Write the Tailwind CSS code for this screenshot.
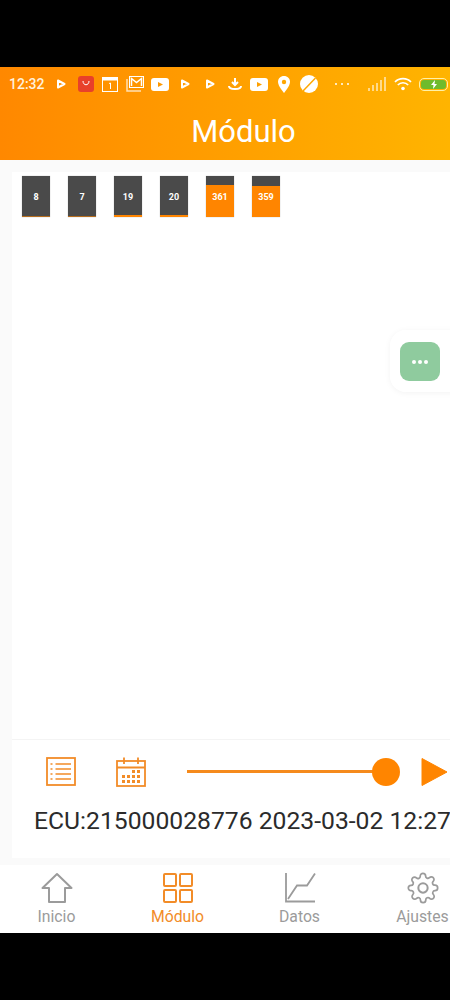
<!DOCTYPE html>
<html lang="en">
<head>
    <meta charset="UTF-8">
    <meta name="viewport" content="width=device-width, initial-scale=1.0">
    <title>Módulo</title>
    <script src="https://cdn.jsdelivr.net/npm/@tailwindcss/browser@4"></script>
</head>
<body class="bg-black">
<div class="relative w-[450px] h-[1000px] overflow-hidden flex flex-col bg-black font-['Roboto',sans-serif]">
    <div class="h-[67px] shrink-0"></div>

    <!-- header with status bar -->
    <header class="h-[93px] shrink-0 bg-gradient-to-r from-[#ff8800] to-[#ffb400] text-white">
        <div class="h-[34px] flex items-center pl-[9px] relative">
            <span class="text-[14px] font-medium w-[44px] text-[#fff1dc]">12:32</span>
            <div class="flex items-center h-full">
                <svg class="ml-[3px] w-[10px] h-[10px]" viewBox="0 0 10 10"><path d="M2 1.5 L8.5 5 L2 8.5 Z" fill="none" stroke="white" stroke-width="2" stroke-linejoin="round"/></svg>
                <div class="ml-[12px] w-[16px] h-[16px] rounded-[3px] bg-[#e8402a] flex items-center justify-center">
                    <svg class="w-[10px] h-[8px]" viewBox="0 0 10 8"><path d="M2 1 C2 6 8 6 8 1" fill="none" stroke="white" stroke-width="1"/></svg>
                </div>
                <svg class="ml-[8px] w-[16px] h-[15px]" viewBox="0 0 16 15"><rect x="0.5" y="0.5" width="15" height="14" fill="none" stroke="white"/><rect x="0.5" y="0.5" width="15" height="3" fill="white"/><path d="M7 6.5 L8.5 6 V12" fill="none" stroke="white"/></svg>
                <svg class="ml-[8px] w-[18px] h-[16px]" viewBox="0 0 18 16"><rect x="3.5" y="0.5" width="14" height="11" fill="none" stroke="white"/><path d="M5.5 10 V2.5 L10.5 6.5 L15.5 2.5 V10" fill="none" stroke="white" stroke-width="1.5"/><path d="M1 3 V15 H15" fill="none" stroke="white" stroke-opacity="0.7" stroke-width="1.5"/></svg>
                <svg class="ml-[7px] w-[18px] h-[13px]" viewBox="0 0 18 13"><rect width="18" height="13" rx="3" fill="white"/><path d="M7 4 L12 6.5 L7 9 Z" fill="#ff9800"/></svg>
                <svg class="ml-[11px] w-[10px] h-[10px]" viewBox="0 0 10 10"><path d="M2 1.5 L8.5 5 L2 8.5 Z" fill="none" stroke="white" stroke-width="2" stroke-linejoin="round"/></svg>
                <svg class="ml-[15px] w-[10px] h-[10px]" viewBox="0 0 10 10"><path d="M2 1.5 L8.5 5 L2 8.5 Z" fill="none" stroke="white" stroke-width="2" stroke-linejoin="round"/></svg>
                <svg class="ml-[13px] w-[14px] h-[14px]" viewBox="0 0 14 14"><path d="M7 1 V7 M4 5 L7 8 L10 5" fill="none" stroke="white" stroke-width="2"/><path d="M1 9 C1 13 13 13 13 9" fill="none" stroke="white" stroke-width="2"/></svg>
                <svg class="ml-[8px] w-[18px] h-[13px]" viewBox="0 0 18 13"><rect width="18" height="13" rx="3" fill="white"/><path d="M7 4 L12 6.5 L7 9 Z" fill="#ffa000"/></svg>
                <svg class="ml-[10px] w-[12px] h-[17px]" viewBox="0 0 12 17"><path d="M6 0 C2.5 0 0 2.5 0 6 C0 10 6 17 6 17 C6 17 12 10 12 6 C12 2.5 9.5 0 6 0 Z" fill="white"/><circle cx="6" cy="6" r="2.2" fill="#ffa600"/></svg>
                <svg class="ml-[10px] w-[18px] h-[18px]" viewBox="0 0 18 18"><circle cx="9" cy="9" r="9" fill="white"/><path d="M3 16 L15.5 3" stroke="#ffa800" stroke-width="1.5"/></svg>
            </div>
            <div class="ml-[17px] flex gap-[4px]">
                <span class="w-[2px] h-[2px] rounded-full bg-white"></span>
                <span class="w-[2px] h-[2px] rounded-full bg-white"></span>
                <span class="w-[2px] h-[2px] rounded-full bg-white"></span>
            </div>
            <svg class="ml-[19px] w-[19px] h-[14px]" viewBox="0 0 19 14"><g fill="white" fill-opacity="0.55"><rect x="0" y="11" width="2" height="3"/><rect x="4" y="8" width="2" height="6"/><rect x="8" y="6" width="2" height="8"/><rect x="12" y="3" width="2" height="11"/><rect x="16" y="0" width="2" height="14"/></g></svg>
            <svg class="ml-[7px] w-[18px] h-[14px]" viewBox="0 0 18 14"><path d="M1 5 C5 0.5 13 0.5 17 5 M3.8 8 C6.5 5 11.5 5 14.2 8" fill="none" stroke="white" stroke-width="1.6"/><circle cx="9" cy="11.5" r="1.8" fill="white"/></svg>
            <div class="ml-[7px] w-[29px] h-[13px] rounded-[5px] border border-[#fff1a8] p-[1px]">
                <div class="w-full h-full rounded-[3px] bg-[#6fbb2c] flex items-center justify-center">
                    <svg class="w-[8px] h-[9px]" viewBox="0 0 8 9"><path d="M5 0 L1 5 H3.5 L3 9 L7 4 H4.5 Z" fill="white"/></svg>
                </div>
            </div>
        </div>
        <h1 class="h-[59px] flex items-center justify-center text-[31px] font-normal leading-none pl-[37px] pt-[1px]">Módulo</h1>
    </header>

    <!-- main area -->
    <main class="relative h-[705px] shrink-0 bg-[#fafafa] pl-[12px] pt-[12px] pb-[7px] flex flex-col">
        <section class="h-[568px] shrink-0 bg-white border-b border-[#f4f4f4] pt-[4px] pl-[10px] flex gap-[18px] items-start">
            <div class="w-[28px] h-[41px] bg-[#4a4a4a] flex flex-col shadow-[0_0_1px_rgba(0,0,0,0.3)]">
                <div class="flex-1 flex items-center justify-center text-white text-[9px] font-bold pt-[3px]">8</div>
                <div class="h-[1px] bg-[#ff8500]/60"></div>
            </div>
            <div class="w-[28px] h-[41px] bg-[#4a4a4a] flex flex-col shadow-[0_0_1px_rgba(0,0,0,0.3)]">
                <div class="flex-1 flex items-center justify-center text-white text-[9px] font-bold pt-[3px]">7</div>
                <div class="h-[1px] bg-[#ff8500]/60"></div>
            </div>
            <div class="w-[28px] h-[41px] bg-[#4a4a4a] flex flex-col shadow-[0_0_1px_rgba(0,0,0,0.3)]">
                <div class="flex-1 flex items-center justify-center text-white text-[9px] font-bold pt-[4px]">19</div>
                <div class="h-[2px] bg-[#ff8500]"></div>
            </div>
            <div class="w-[28px] h-[41px] bg-[#4a4a4a] flex flex-col shadow-[0_0_1px_rgba(0,0,0,0.3)]">
                <div class="flex-1 flex items-center justify-center text-white text-[9px] font-bold pt-[4px]">20</div>
                <div class="h-[2px] bg-[#ff8500]"></div>
            </div>
            <div class="relative w-[28px] h-[41px] bg-[#ff8500] shadow-[0_0_1px_rgba(0,0,0,0.3)]">
                <div class="h-[9px] bg-[#4a4a4a]"></div>
                <span class="absolute inset-0 pt-[3px] flex items-center justify-center text-white text-[9px] font-bold">361</span>
            </div>
            <div class="relative w-[28px] h-[41px] bg-[#ff8500] shadow-[0_0_1px_rgba(0,0,0,0.3)]">
                <div class="h-[10px] bg-[#4a4a4a]"></div>
                <span class="absolute inset-0 pt-[3px] flex items-center justify-center text-white text-[9px] font-bold">359</span>
            </div>
        </section>

        <section class="flex-1 bg-white overflow-hidden">
            <div class="h-[60px] flex items-center pt-[3px]">
                <svg class="ml-[34px] w-[30px] h-[29px] shrink-0" viewBox="0 0 30 29">
                    <rect x="1" y="1" width="28" height="27" fill="none" stroke="#f28c28" stroke-width="1.8"/>
                    <g stroke="#f28c28" stroke-width="1.6"><path d="M9.5 7 H25 M9.5 12 H25 M9.5 17 H25 M9.5 22 H25"/><path d="M4.5 7 H6.5 M4.5 12 H6.5 M4.5 17 H6.5 M4.5 22 H6.5"/></g>
                </svg>
                <svg class="ml-[40px] w-[30px] h-[30px] shrink-0" viewBox="0 0 30 30">
                    <rect x="1" y="4" width="28" height="25" fill="none" stroke="#f28c28" stroke-width="1.8"/>
                    <path d="M1 10.5 H29 M8 0.5 V7 M22 0.5 V7" stroke="#f28c28" stroke-width="1.8"/>
                    <g fill="#f28c28"><rect x="16" y="13" width="3" height="3"/><rect x="21" y="13" width="3" height="3"/><rect x="6" y="18" width="3" height="3"/><rect x="11" y="18" width="3" height="3"/><rect x="16" y="18" width="3" height="3"/><rect x="21" y="18" width="3" height="3"/><rect x="6" y="23" width="3" height="3"/><rect x="11" y="23" width="3" height="3"/><rect x="16" y="23" width="3" height="3"/><rect x="21" y="23" width="3" height="3"/></g>
                </svg>
                <div class="ml-[41px] w-[186px] h-[3px] bg-[#f58a1c] shrink-0"></div>
                <div class="w-[28px] h-[28px] rounded-full bg-[#ff8500] shrink-0 -ml-[1px]"></div>
                <svg class="ml-[21px] w-[27px] h-[30px] shrink-0" viewBox="0 0 27 30"><path d="M1 1.5 L26 15 L1 28.5 Z" fill="#ff8500" stroke="#ff8500" stroke-linejoin="round"/></svg>
            </div>
            <p class="pl-[22px] mt-[3px] text-[24.7px] leading-[36px] text-[#2b2b2b] whitespace-nowrap">ECU:215000028776 2023-03-02 12:27</p>
        </section>
    </main>

    <!-- bottom navigation -->
    <nav class="h-[68px] shrink-0 bg-white flex -ml-[4px] pt-[7px]">
        <div class="w-[121px] shrink-0 flex flex-col items-center text-[#9b9b9b]">
            <svg class="w-[32px] h-[32px]" viewBox="0 0 32 32"><path d="M16 2 L1.5 16 H8 V30 H24 V16 H30.5 Z" fill="none" stroke="#9b9b9b" stroke-width="2" stroke-linejoin="round"/></svg>
            <span class="text-[15.75px] leading-[20px] mt-[3px]">Inicio</span>
        </div>
        <div class="w-[121px] shrink-0 flex flex-col items-center text-[#f28c28]">
            <svg class="w-[32px] h-[32px]" viewBox="0 0 32 32"><g fill="none" stroke="#f28c28" stroke-width="2"><rect x="2" y="2" width="12" height="12" rx="1"/><rect x="18" y="2" width="12" height="12" rx="1"/><rect x="2" y="18" width="12" height="12" rx="1"/><rect x="18" y="18" width="12" height="12" rx="1"/></g></svg>
            <span class="text-[15.75px] leading-[20px] mt-[3px]">Módulo</span>
        </div>
        <div class="w-[121px] ml-[1px] shrink-0 flex flex-col items-center text-[#9b9b9b]">
            <svg class="w-[32px] h-[32px]" viewBox="0 0 32 32"><path d="M2 1 V29.5 H31 M4 27 L13 13.5 H23 L31 1.5" fill="none" stroke="#9b9b9b" stroke-width="1.8"/></svg>
            <span class="text-[15.75px] leading-[20px] mt-[3px]">Datos</span>
        </div>
        <div class="w-[121px] ml-[2px] shrink-0 flex flex-col items-center text-[#9b9b9b]">
            <svg class="w-[32px] h-[32px]" viewBox="0 0 24 24"><path d="M12 15.5a3.5 3.5 0 1 0 0-7 3.5 3.5 0 0 0 0 7Z" fill="none" stroke="#9b9b9b" stroke-width="1.5"/><path d="M19.4 15a1.65 1.65 0 0 0 .33 1.82l.06.06a2 2 0 1 1-2.83 2.83l-.06-.06a1.65 1.65 0 0 0-2.82 1.17V21a2 2 0 1 1-4 0v-.09A1.65 1.65 0 0 0 7.27 19.7l-.06.06a2 2 0 1 1-2.83-2.83l.06-.06a1.65 1.65 0 0 0-1.17-2.82H3a2 2 0 1 1 0-4h.09A1.65 1.65 0 0 0 4.3 7.27l-.06-.06a2 2 0 1 1 2.83-2.83l.06.06a1.65 1.65 0 0 0 2.82-1.17V3a2 2 0 1 1 4 0v.09a1.65 1.65 0 0 0 2.82 1.17l.06-.06a2 2 0 1 1 2.83 2.83l-.06.06a1.65 1.65 0 0 0 1.17 2.82H21a2 2 0 1 1 0 4h-.09A1.65 1.65 0 0 0 19.4 15Z" fill="none" stroke="#9b9b9b" stroke-width="1.3"/></svg>
            <span class="text-[15.75px] leading-[20px] mt-[3px]">Ajustes</span>
        </div>
    </nav>

    <!-- floating button -->
    <div class="absolute left-[390px] top-[330px] w-[70px] h-[62px] rounded-l-[16px] bg-white/80 shadow-[0_1px_6px_rgba(0,0,0,0.05)] pl-[10px] pt-[12px]">
        <div class="w-[40px] h-[39px] rounded-[9px] bg-[#8fcb9e] flex items-center justify-center gap-[2px]">
            <span class="w-[4px] h-[4px] rounded-full bg-white"></span>
            <span class="w-[4px] h-[4px] rounded-full bg-white"></span>
            <span class="w-[4px] h-[4px] rounded-full bg-white"></span>
        </div>
    </div>
</div>
</body>
</html>
